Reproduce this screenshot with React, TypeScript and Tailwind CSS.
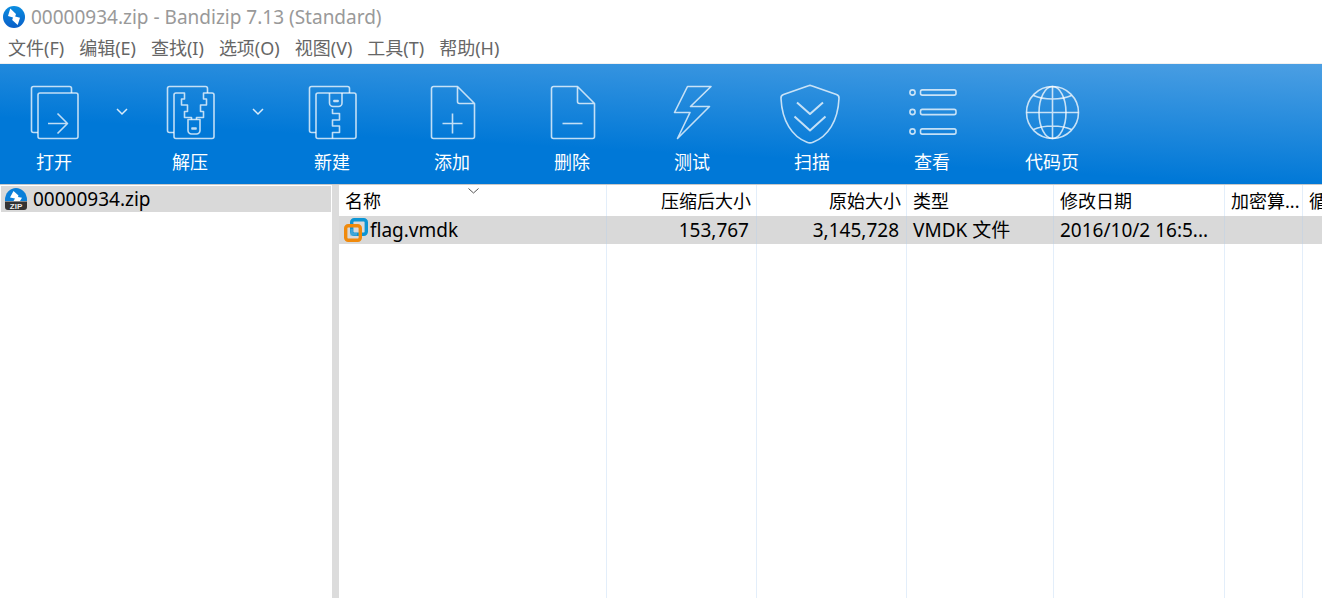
import { useState, type ReactNode } from "react";

// Shared frame for the toolbar drawings
function Glyph({ children }: { children: ReactNode }) {
  return (
    <svg
      width="60"
      height="60"
      viewBox="0 0 60 60"
      className="overflow-visible shrink-0"
      fill="none"
      stroke="#ffffff"
      strokeOpacity="0.75"
      strokeWidth="1.6"
      strokeLinejoin="round"
      aria-hidden="true"
    >
      {children}
    </svg>
  );
}

const backPage = "M14 48.5h-4.500a2 2 0 0 1-2-2V4.500a2 2 0 0 1 2-2h36a2 2 0 0 1 2 2V9";

function OpenIcon() {
  return (
    <Glyph>
      <path d={backPage} />
      <rect x="14" y="9" width="40" height="45.500" rx="2" />
      <path d="M24 39.500h19.500M33.500 29.500l10 10-10 10" />
    </Glyph>
  );
}

function ExtractIcon() {
  return (
    <Glyph>
      <path d={backPage} />
      <path d="M31.500 35.500v-2h-7v-6h3v-6.500h-6v-6h3V9H16a2 2 0 0 0-2 2v41.500a2 2 0 0 0 2 2h36a2 2 0 0 0 2-2V11a2 2 0 0 0-2-2h-8.500v6h3v6h-6v6.500h3v6h-7v2" />
      <path d="M28 35.500h12v11a3.500 3.500 0 0 1-3.500 3.500h-5a3.500 3.500 0 0 1-3.500-3.500z" />
      <rect x="32" y="44" width="4" height="1" />
    </Glyph>
  );
}

function NewIcon() {
  return (
    <Glyph>
      <path d={backPage} />
      <rect x="14" y="9" width="40" height="45.500" rx="2" />
      <path d="M27.500 9v10a3.500 3.500 0 0 0 3.500 3.500h5.500a3.500 3.500 0 0 0 3.500-3.500V9" />
      <rect x="32" y="16.500" width="4" height="1" />
      <path d="M30.500 25v4.500h7V36h-7v6h7v6.500h-7v6" />
    </Glyph>
  );
}

const sheet = "M35.500 2.500h-24a2 2 0 0 0-2 2v48a2 2 0 0 0 2 2H50.500a2 2 0 0 0 2-2v-33zM35.500 2.500v15a2 2 0 0 0 2 2h15";

function AddIcon() {
  return (
    <Glyph>
      <path d={sheet} />
      <path d="M20.500 39.500h20M30.500 29.500v20" />
    </Glyph>
  );
}

function DeleteIcon() {
  return (
    <Glyph>
      <path d={sheet} />
      <path d="M20.500 39.500h20" />
    </Glyph>
  );
}

function TestIcon() {
  return (
    <Glyph>
      <path d="M25.500 2.500H49l-20.500 20h19L15.500 54.500 28 28.500H12.500z" />
    </Glyph>
  );
}

function ScanIcon() {
  return (
    <Glyph>
      <path d="M26.500 1.700a4 4 0 0 1 3 0L54.500 10.600Q57.300 11.600 57 14.500C56 37 46 52.500 31 58.300Q28 59.500 25 58.300C10 52.500 0 37-1 14.500Q-1.300 11.600 1.500 10.600z" />
      <path d="M15 18.500L28 30l13-11.500M12.500 32.500L28 46.500l15.500-14" strokeWidth="2" />
    </Glyph>
  );
}

function ViewIcon() {
  return (
    <Glyph>
      {[8.5, 28, 47.5].map((y) => (
        <g key={y}>
          <circle cx="10.5" cy={y} r="2.6" />
          <rect x="18.5" y={y - 2.6} width="35.500" height="5.200" rx="1.800" />
        </g>
      ))}
    </Glyph>
  );
}

function CodePageIcon() {
  return (
    <Glyph>
      <circle cx="30.500" cy="28.500" r="26" />
      <ellipse cx="30.500" cy="28.500" rx="13.500" ry="26" />
      <path d="M30.500 2.500v52M4.500 28.500h52M11.500 11.500C17 14 23 15 30.500 15s13.500-1 19-3.500M11.500 45.500C17 43 23 42 30.500 42s13.500 1 19 3.500" />
    </Glyph>
  );
}

function BoltLogo() {
  return (
    <svg width="24" height="24" viewBox="0 0 24 24" aria-hidden="true">
      <defs>
        <linearGradient id="logo" x1="0" y1="0" x2="0" y2="1">
          <stop offset="0" stopColor="#0a8de0" />
          <stop offset="1" stopColor="#0a5fc8" />
        </linearGradient>
      </defs>
      <circle cx="12" cy="12" r="11" fill="url(#logo)" />
      <path d="M8.300 3.500L14 9l-.8 2.500 4.800 1.300L15.700 20 10.200 15l.8-2.600-5-1.400z" fill="#fff" />
    </svg>
  );
}

function ZipFileIcon() {
  return (
    <svg width="24" height="24" viewBox="0 0 24 24" aria-hidden="true">
      <path d="M1 13a11 12 0 0 1 22 0v1H1z" fill="#0a7fd9" />
      <path d="M9.500 4l5 4.500-.5 1.500 4 .8-2 3.200H9.500l1.500-2.500-5-1z" fill="#fff" />
      <path d="M1 14.500h22V20a3 3 0 0 1-3 3H4a3 3 0 0 1-3-3z" fill="#333" />
      <text
        x="12"
        y="22"
        textAnchor="middle"
        fontSize="8"
        fontWeight="700"
        fontFamily="Liberation Sans, sans-serif"
        fill="#eee"
      >
        ZIP
      </text>
    </svg>
  );
}

function VmdkIcon() {
  return (
    <svg width="24" height="24" viewBox="0 0 24 24" fill="none" strokeWidth="3.400" aria-hidden="true">
      <rect x="7.700" y="1.700" width="14.600" height="14.600" rx="2.500" stroke="#0c95d4" />
      <rect x="1.700" y="7.700" width="14.600" height="14.600" rx="2.500" stroke="#f08a0c" />
      <path d="M7.700 11v5.300H13" stroke="#3fa5d6" strokeWidth="2.400" />
    </svg>
  );
}

const menus = ["文件(F)", "编辑(E)", "查找(I)", "选项(O)", "视图(V)", "工具(T)", "帮助(H)"];

const tools = [
  { label: "打开", icon: <OpenIcon />, hasMenu: true },
  { label: "解压", icon: <ExtractIcon />, hasMenu: true },
  { label: "新建", icon: <NewIcon /> },
  { label: "添加", icon: <AddIcon /> },
  { label: "删除", icon: <DeleteIcon /> },
  { label: "测试", icon: <TestIcon /> },
  { label: "扫描", icon: <ScanIcon /> },
  { label: "查看", icon: <ViewIcon /> },
  { label: "代码页", icon: <CodePageIcon /> },
];

const columns = [
  { title: "名称", value: "flag.vmdk", width: "w-[268px]" },
  { title: "压缩后大小", value: "153,767", width: "w-[150px]", right: true },
  { title: "原始大小", value: "3,145,728", width: "w-[150px]", right: true },
  { title: "类型", value: "VMDK 文件", width: "w-[147px]" },
  { title: "修改日期", value: "2016/10/2 16:5...", width: "w-[171px]" },
  { title: "加密算...", value: "", width: "w-[78px]" },
  { title: "循", value: "", width: "w-auto" },
];

function ToolButton({ label, icon, hasMenu }: { label: string; icon: ReactNode; hasMenu?: boolean }) {
  return (
    <div className="flex shrink-0">
      <button
        className={`flex flex-col items-center pt-5 text-[18px] leading-[24px] text-white hover:bg-white/10 ${
          hasMenu ? "w-[108px]" : "w-[120px]"
        }`}
      >
        {icon}
        <span className="mt-1.5">{label}</span>
      </button>
      {hasMenu && (
        <button aria-label={`${label}菜单`} className="flex w-7 justify-center pt-11 hover:bg-white/10">
          <svg width="12" height="8" viewBox="0 0 12 8" fill="none" stroke="#fff" strokeOpacity="0.85" strokeWidth="1.500">
            <path d="M1 1l5 5 5-5" />
          </svg>
        </button>
      )}
    </div>
  );
}

export default function App() {
  const [selected, setSelected] = useState(true);

  return (
    <div className="flex h-screen flex-col overflow-hidden bg-white font-['Noto_Sans','Noto_Sans_CJK_SC',sans-serif] text-black">
      {/* Title bar */}
      <header className="flex h-[34px] shrink-0 items-center gap-[5px] pl-0.5 text-[19px] text-[#999999]">
        <BoltLogo />
        <h1>00000934.zip - Bandizip 7.13 (Standard)</h1>
      </header>

      {/* Menu bar */}
      <nav className="flex h-[30px] shrink-0 items-center gap-[15px] border-b border-[#f0f0f0] pl-2 text-[18px] text-[#666666]">
        {menus.map((m) => (
          <button key={m} className="whitespace-nowrap">
            {m}
          </button>
        ))}
      </nav>

      {/* Toolbar */}
      <div className="flex h-[121px] shrink-0 border-b border-[#c8c8c8] bg-[linear-gradient(183deg,#4c9fe3_0%,#0078d7_65%)]">
        {tools.map((t) => (
          <ToolButton key={t.label} {...t} />
        ))}
      </div>

      <main className="flex min-h-0 flex-1">
        {/* Folder tree */}
        <aside className="w-[332px] shrink-0 pt-px pr-px pl-px">
          <button className="flex h-[26px] w-full items-center gap-[5px] bg-[#d9d9d9] pl-[3px] text-[19px]">
            <ZipFileIcon />
            00000934.zip
          </button>
        </aside>
        <div className="w-[7px] shrink-0 bg-[#dcdcdc]" />

        {/* File list */}
        <section className="relative min-w-0 flex-1">
          <table className="h-full w-full table-fixed border-separate border-spacing-0 whitespace-nowrap">
            <thead>
              <tr className="h-[31px] text-[18px]">
                {columns.map((c) => (
                  <th
                    key={c.title}
                    scope="col"
                    className={`overflow-hidden border-r border-[#e3eefa] pt-0.5 font-normal last:border-r-0 ${c.width} ${
                      c.right ? "pr-[5px] text-right" : "pl-1.5 text-left"
                    }`}
                  >
                    {c.title}
                  </th>
                ))}
              </tr>
            </thead>
            <tbody>
              <tr
                className={`h-7 text-[19px] leading-7 ${selected ? "bg-[#d9d9d9]" : ""}`}
                onClick={() => setSelected(!selected)}
              >
                {columns.map((c, i) => (
                  <td
                    key={c.title}
                    className={`overflow-hidden border-r border-[#cbd5e0] p-0 last:border-r-0 ${
                      c.right ? "pr-[7px] text-right" : i === 0 ? "pl-[5px]" : "pl-1.5"
                    }`}
                  >
                    {i === 0 ? (
                      <span className="flex items-center gap-0.5">
                        <VmdkIcon />
                        {c.value}
                      </span>
                    ) : (
                      c.value
                    )}
                  </td>
                ))}
              </tr>
              <tr>
                {columns.map((c) => (
                  <td key={c.title} className="border-r border-[#e3eefa] last:border-r-0" />
                ))}
              </tr>
            </tbody>
          </table>
          {/* Sort mark over the name column */}
          <svg
            className="absolute top-[3px] left-[129px]"
            width="11"
            height="6"
            viewBox="0 0 11 6"
            fill="none"
            stroke="#555"
            aria-hidden="true"
          >
            <path d="M.5 .5l5 4.500 5-4.500" />
          </svg>
        </section>
      </main>
    </div>
  );
}
